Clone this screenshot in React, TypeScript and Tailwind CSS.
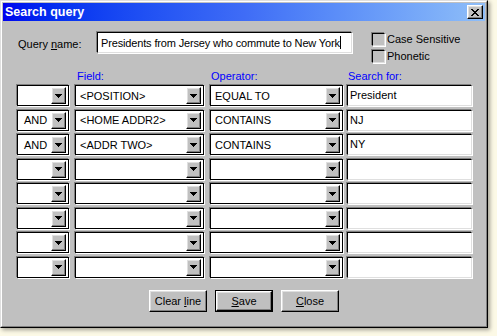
const Arrow = () => (
  <svg width="7" height="4" viewBox="0 0 7 4" shapeRendering="crispEdges">
    <path d="M0 0h7v1H0zM1 1h5v1H1zM2 2h3v1H2zM3 3h1v1H3z" fill="#000" />
  </svg>
);

const CloseGlyph = () => (
  <svg width="8" height="7" viewBox="0 0 8 7" shapeRendering="crispEdges">
    <path
      d="M0 0h2v1H0zM6 0h2v1H6zM1 1h2v1H1zM5 1h2v1H5zM2 2h4v1H2zM3 3h2v1H3zM2 4h4v1H2zM1 5h2v1H1zM5 5h2v1H5zM0 6h2v1H0zM6 6h2v1H6z"
      fill="#000"
    />
  </svg>
);

const sunken =
  "border border-t-black border-l-black border-r-[#dfdfdf] border-b-[#dfdfdf] shadow-[-1px_-1px_0_#808080,1px_1px_0_#ffffff]";
const raised =
  "bg-[#c0c0c0] border border-t-white border-l-white border-r-black border-b-black shadow-[inset_-1px_-1px_0_#808080,inset_1px_1px_0_#dfdfdf]";

const Combo = ({ w, pad, value }: { w: string; pad: string; value: string }) => (
  <div className={`${w} h-[21px] flex bg-white border border-black p-[1px] shadow-[-1px_-1px_0_#808080,1px_1px_0_#ffffff]`}>
    <div className={`flex-1 flex items-center whitespace-nowrap overflow-hidden ${pad}`}>{value}</div>
    <div className={`w-[15px] mr-[1px] flex items-center justify-center ${raised}`}>
      <Arrow />
    </div>
  </div>
);

const rows = [
  ["", "<POSITION>", "EQUAL TO", "President"],
  ["AND", "<HOME ADDR2>", "CONTAINS", "NJ"],
  ["AND", "<ADDR TWO>", "CONTAINS", "NY"],
  ["", "", "", ""],
  ["", "", "", ""],
  ["", "", "", ""],
  ["", "", "", ""],
  ["", "", "", ""],
];

export default function App() {
  return (
    <div className="w-[497px] h-[336px] bg-[#fcf9e6] font-['Liberation_Sans',Arial,sans-serif] text-[11px] leading-[14px] text-black">
      <div className="w-[488px] h-[328px] bg-[#c0c0c0] border border-t-[#dfdfdf] border-l-[#dfdfdf] border-r-black border-b-black shadow-[2px_2px_4px_rgba(0,0,0,0.35)]">
        <div className="h-full flex flex-col p-[1px] border border-t-white border-l-white border-r-[#808080] border-b-[#808080]">
          {/* title bar */}
          <div className="h-[18px] flex items-center justify-between px-[2px] bg-linear-to-r from-[#0000ee] via-[#3f6cf6] to-[#8fbef8]">
            <span className="text-white font-bold text-[12.5px]">Search query</span>
            <div className={`w-[16px] h-[14px] flex items-center justify-center ${raised}`}>
              <CloseGlyph />
            </div>
          </div>

          <div className="pl-[14px] flex flex-col">
            {/* query name */}
            <div className="mt-[11px] h-[30px] flex items-start">
              <div className="w-[80px] h-[21px] flex items-center pl-[1px] pt-[2px]">
                Query <span className="underline ml-[3px]">n</span>ame:
              </div>
              <div className={`w-[255px] h-[21px] bg-white flex items-center pl-[3px] ${sunken}`}>
                <span className="tracking-[-0.15px]">Presidents from Jersey who commute to New York</span>
                <span className="w-[1px] h-[13px] bg-black" />
              </div>
              <div className="ml-[20px] flex flex-col gap-[3px]">
                <div className="flex items-center">
                  <div className={`w-[13px] h-[13px] bg-[#c0c0c0] ${sunken}`} />
                  <span className="ml-[2px]">Case Sensitive</span>
                </div>
                <div className="flex items-center">
                  <div className={`w-[13px] h-[13px] bg-[#c0c0c0] ${sunken}`} />
                  <span className="ml-[2px]">Phonetic</span>
                </div>
              </div>
            </div>

            {/* headers */}
            <div className="mt-[7px] mb-[2px] h-[14px] flex text-[#0000ff]">
              <div className="w-[58px]" />
              <div className="w-[135px] pl-[2px]">Field:</div>
              <div className="w-[137px] pl-[1px]">Operator:</div>
              <div className="pl-[1px]">Search for:</div>
            </div>

            {/* rows */}
            <div className="flex flex-col gap-[3.5px]">
              {rows.map((r, i) => (
                <div key={i} className="flex h-[21px]">
                  <Combo w="w-[52px]" pad="pl-[5px]" value={r[0]} />
                  <div className="ml-[6px]">
                    <Combo w="w-[129px]" pad="pl-[3px]" value={r[1]} />
                  </div>
                  <div className="ml-[6px]">
                    <Combo w="w-[133px]" pad="pl-[3px]" value={r[2]} />
                  </div>
                  <div className={`ml-[4px] w-[125px] h-[21px] bg-white flex items-start pt-[2px] pl-[2px] ${sunken}`}>
                    {r[3]}
                  </div>
                </div>
              ))}
            </div>
          </div>

          {/* buttons */}
          <div className="mt-[12px] flex justify-center gap-[8px]">
            <div className={`w-[58px] h-[22px] flex items-center justify-center ${raised}`}>
              <span>
                Clear <span className="underline">l</span>ine
              </span>
            </div>
            <div className="w-[58px] h-[22px] border border-black">
              <div className={`w-full h-full flex items-center justify-center ${raised}`}>
                <span>
                  <span className="underline">S</span>ave
                </span>
              </div>
            </div>
            <div className={`w-[58px] h-[22px] flex items-center justify-center ${raised}`}>
              <span>
                <span className="underline">C</span>lose
              </span>
            </div>
          </div>
        </div>
      </div>
    </div>
  );
}
